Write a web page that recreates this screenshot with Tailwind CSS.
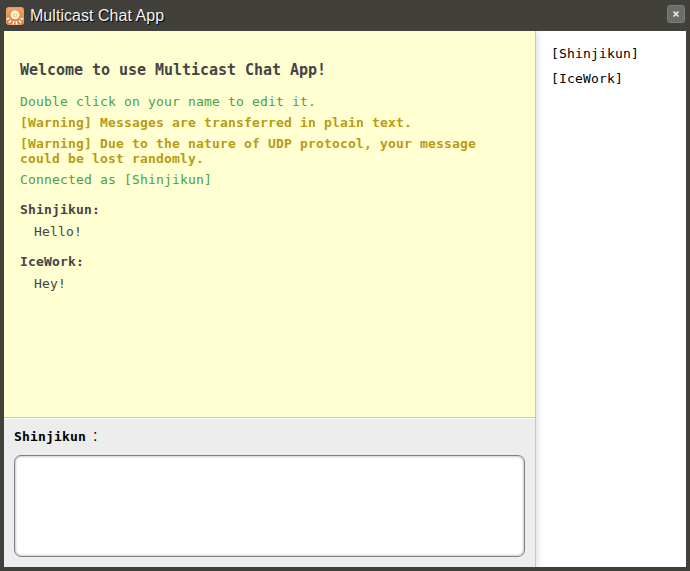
<!DOCTYPE html>
<html lang="en">
<head>
<meta charset="utf-8">
<title>Multicast Chat App</title>
<script src="https://cdn.jsdelivr.net/npm/@tailwindcss/browser@4"></script>
</head>
<body class="h-[571px] w-[690px] overflow-hidden bg-[#41403b] font-['DejaVu_Sans_Mono',monospace] text-[13px] leading-[15px]">
<div class="flex h-full flex-col px-1 pb-1">
  <header class="flex h-[31px] shrink-0 items-center pl-0.5 pr-px">
    <svg class="size-[18px] shrink-0" viewBox="0 0 18 18">
      <defs><linearGradient id="g" x2="0" y2="1"><stop stop-color="#f2a565"/><stop offset="1" stop-color="#de7838"/></linearGradient></defs>
      <rect x=".5" y=".5" width="17" height="17" rx="2" fill="url(#g)" stroke="#e89a60"/>
      <circle cx="9" cy="7.8" r="4.4" fill="#fff8ea"/>
      <path d="M7 7h4v1a2 2 0 0 1-4 0Z" fill="#fff6b8" stroke="#f6bd68" stroke-width=".9"/>
      <path d="M3.4 11.2 1 12.2M4.9 13.4 3 16M7.7 14.2 7.2 17.5M10.3 14.2 10.8 17.5M13.1 13.4 15 16M14.6 11.2 17 12.2" stroke="#fff" stroke-width="1.6"/>
    </svg>
    <h1 class="ml-1.5 flex-1 font-['Liberation_Sans',sans-serif] text-base leading-[18px] tracking-[0.04px] text-[#f3f3f0] [text-shadow:1px_1px_0_#000]">Multicast Chat App</h1>
    <button class="mb-[3px] flex size-[18px] items-center justify-center rounded-[3px] border border-[#7d7d79] bg-[#6c6c69]" aria-label="Close">
      <svg class="size-2" viewBox="0 0 8 8"><path d="M1.5 1.5 6.5 6.5M6.5 1.5 1.5 6.5" stroke="#eee" stroke-width="1.6"/></svg>
    </button>
  </header>
  <main class="flex min-h-0 flex-1 overflow-hidden bg-white">
    <section class="flex w-[532px] flex-col border-r border-[#c6c6c6] shadow-[0_0_8px_rgba(0,0,0,0.2)]">
      <div class="h-[387px] border-b border-[#c6c6c6] bg-[#ffffd2] px-4 pt-[30px] text-[#444]">
        <h2 class="mb-[15px] text-[15px] font-bold leading-[18px] tracking-[-0.03px]">Welcome to use Multicast Chat App!</h2>
        <div class="flex flex-col gap-1.5 tracking-[0.174px]">
          <p class="text-[#4b9e4b]">Double click on your name to edit it.</p>
          <p class="font-bold text-[#b99b13]">[Warning] Messages are transferred in plain text.</p>
          <p class="font-bold text-[#b99b13]">[Warning] Due to the nature of UDP protocol, your message could be lost randomly.</p>
          <p class="text-[#4b9e4b]">Connected as [Shinjikun]</p>
        </div>
        <dl class="mt-[15px] tracking-[0.174px]">
          <dt class="font-bold">Shinjikun:</dt>
          <dd class="mt-[7px] pl-3.5">Hello!</dd>
          <dt class="mt-[15px] font-bold">IceWork:</dt>
          <dd class="mt-[7px] pl-3.5">Hey!</dd>
        </dl>
      </div>
      <form class="flex-1 border-t border-white bg-[#ededed] px-2.5 pt-[7px]">
        <label for="message" class="flex h-[20px] items-center font-bold tracking-[0.174px]">Shinjikun<span class="ml-[7px] font-['Liberation_Sans',sans-serif] text-base font-normal">:</span></label>
        <textarea id="message" class="mt-[9px] block h-[102px] w-full resize-none rounded-[7px] border border-[#808080] bg-white shadow-[inset_0_0_3px_rgba(0,0,0,0.4)]"></textarea>
      </form>
    </section>
    <ul class="flex flex-col gap-2.5 pl-[15px] pt-[15px] text-black tracking-[0.174px]">
      <li>[Shinjikun]</li>
      <li>[IceWork]</li>
    </ul>
  </main>
</div>
</body>
</html>
